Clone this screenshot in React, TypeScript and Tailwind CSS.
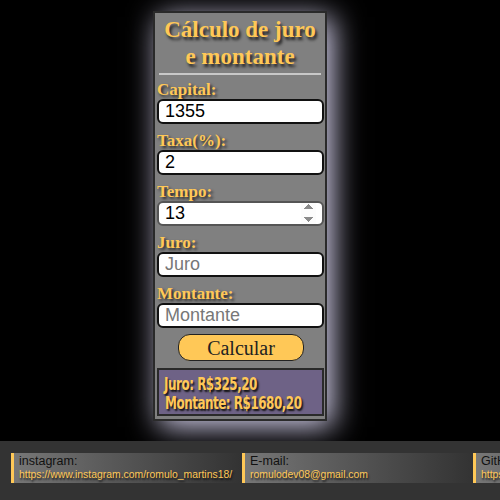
export default function App() {
  const label = "block font-['Liberation_Serif',serif] font-bold text-[17px] leading-[19px] text-[#ffc857] [text-shadow:2px_2px_3px_#222]";
  const input = "block w-[167px] h-[25px] rounded-[6px] border-2 border-[#111] bg-white px-[6px] font-['Liberation_Sans',Arial,sans-serif] text-[18px] text-black placeholder:text-[#777] outline-none";
  const result = "origin-left scale-x-[0.78] font-['DejaVu_Sans',sans-serif] [font-stretch:condensed] font-bold text-[17px] leading-[19px] tracking-[-0.6px] text-[#ffc857] [text-shadow:2px_2px_2px_#111]";
  return (
    <div className="min-h-[500px] w-[500px] bg-black flex flex-col">
      <div className="ml-[153px] mt-[11px] w-[174px] h-[410px] border-2 border-[#2a2a2a] bg-[#808080] px-[2px] shadow-[6px_6px_28px_#d6d2ee]">
        <h1 className="pt-[3px] text-center font-['Liberation_Serif',serif] font-bold text-[23px] leading-[27px] text-[#ffc857] [text-shadow:2px_3px_3px_#222]">
          Cálculo de juro<br />e montante
        </h1>
        <hr className="mt-[3px] mx-[2px] border-t-2 border-[#c8c8c8]" />
        <div className="mt-[5px] flex flex-col">
          <label className={label}>Capital:</label>
          <input className={input} defaultValue="1355" />
          <label className={label + " mt-[7px]"}>Taxa(%):</label>
          <input className={input} defaultValue="2" />
          <label className={label + " mt-[7px]"}>Tempo:</label>
          <input type="number" className={input + " border-[#555] [&::-webkit-inner-spin-button]:opacity-100"} defaultValue="13" />
          <label className={label + " mt-[7px]"}>Juro:</label>
          <input className={input} placeholder="Juro" />
          <label className={label + " mt-[7px]"}>Montante:</label>
          <input className={input} placeholder="Montante" />
          <button className="mt-[6px] ml-[21px] w-[126px] h-[27px] rounded-[12px] border border-[#222] bg-[#ffc857] font-['Liberation_Serif',serif] text-[20px] leading-none text-[#222]">
            Calcular
          </button>
          <div className="mt-[7px] w-[167px] h-[48px] border-2 border-[#2a2a2a] bg-[#6e6286] px-[5px] pt-[5px] whitespace-nowrap">
            <p className={result}>Juro: R$325,20</p>
            <p className={result + " ml-[1px]"}>Montante: R$1680,20</p>
          </div>
        </div>
      </div>
      <footer className="mt-[20px] flex-1 bg-[#333] pt-[12px] pl-[11px] flex overflow-hidden font-['Liberation_Sans',Arial,sans-serif]">
        {[
          ["instagram:", "https://www.instagram.com/romulo_martins18/"],
          ["E-mail:", "romulodev08@gmail.com"],
          ["GitHub:", "https://github.com/romulo"],
        ].map(([t, v]) => (
          <div key={t} className="shrink-0 w-[230px] h-[30px] mr-[1px] border-l-[3px] border-[#ffc857] bg-gradient-to-r from-[#777] to-[#333] pl-[5px] pt-[2px] whitespace-nowrap overflow-hidden">
            <div className="text-[12.5px] leading-[13px] text-[#111]">{t}</div>
            <div className="text-[10.4px] leading-[13px] text-[#ffc857] [text-shadow:1px_2px_2px_#111]">{v}</div>
          </div>
        ))}
      </footer>
    </div>
  );
}
